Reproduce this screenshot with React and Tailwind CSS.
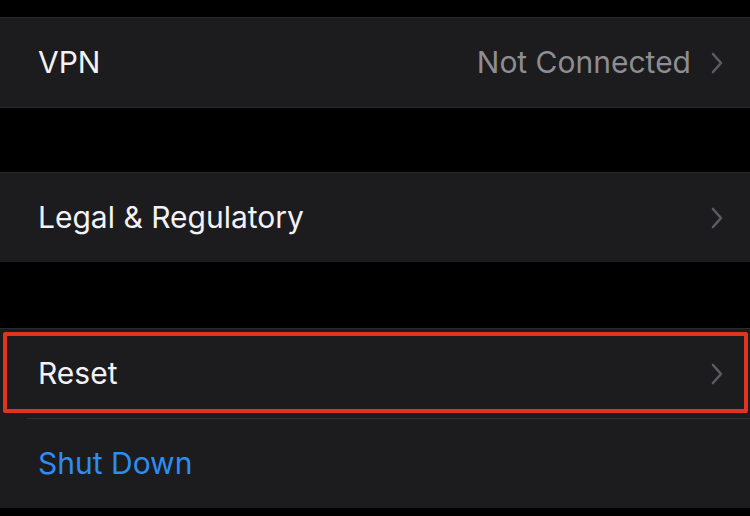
import React from "react";

const Chevron = () => (
  <svg width="14" height="22" viewBox="0 0 14 22" fill="none" className="shrink-0">
    <path d="M3 2 L11 11 L3 20" stroke="#5b5b60" strokeWidth="2.6" strokeLinecap="round" strokeLinejoin="round" />
  </svg>
);

const Row = ({ label, value, chevron = true, blue = false }) => (
  <div className="flex items-center h-[89px] pl-[38px] pr-[26px]">
    <span className={`text-[30px] ${blue ? "text-[#2f8cf0]" : "text-[#f2f2f7]"}`}>{label}</span>
    <div className="flex-1" />
    {value && <span className="text-[30px] text-[#8d8d92] mr-[19px]">{value}</span>}
    {chevron && <Chevron />}
  </div>
);

export default function App() {
  return (
    <div className="w-[750px] h-[516px] bg-black overflow-hidden flex flex-col" style={{ fontFamily: "Inter, 'Noto Sans', sans-serif" }}>
      <div className="h-[17px]" />
      <div className="bg-[#1c1c1e] border-t border-b border-[#2a2a2d]">
        <Row label="VPN" value="Not Connected" />
      </div>
      <div className="h-[64px]" />
      <div className="bg-[#1c1c1e] border-t border-[#2a2a2d]">
        <Row label="Legal & Regulatory" />
      </div>
      <div className="h-[66px]" />
      <div className="relative bg-[#1c1c1e] border-t border-[#2a2a2d]">
        <Row label="Reset" />
        <div className="ml-[27px] h-px bg-[#2e2e31]" />
        <Row label="Shut Down" chevron={false} blue />
        <div className="absolute left-[3px] right-[2px] top-[3px] h-[81px] border-[4px] border-[#e0341e] rounded-[2px]" />
      </div>
    </div>
  );
}
